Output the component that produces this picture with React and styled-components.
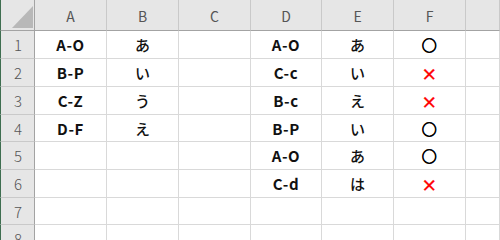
import { Fragment } from "react";
import styled, { createGlobalStyle } from "styled-components";

const Global = createGlobalStyle`
  html, body { margin: 0; padding: 0; background: #fff; }
  body { font-family: "Noto Sans CJK JP", "Noto Sans", sans-serif; }
`;

const Sheet = styled.div`
  display: grid;
  grid-template-columns: 35px 72px 72px 72px 71px 72px 72px 1fr;
  grid-template-rows: 31px 28px 28px 28px 27px 28px 28px 27px 20px;
  width: 500px;
  height: 240px;
  overflow: hidden;
`;

const Corner = styled.div`
  background: #e6e6e6;
  border-left: 1px solid #3f6e50;
  border-right: 1px solid #a3a3a3;
  border-bottom: 1px solid #a3a3a3;
  display: flex;
  align-items: flex-end;
  justify-content: flex-end;
  padding: 0 1px 2px 0;
  svg { display: block; }
`;

const ColHead = styled.div`
  background: #e6e6e6;
  border-right: 1px solid #c9c9c9;
  border-bottom: 1px solid #a3a3a3;
  display: flex;
  align-items: center;
  justify-content: center;
  color: #555;
  font-size: 14px;
  padding-top: 1px;
`;

const RowHead = styled.div`
  background: #e6e6e6;
  border-left: 1px solid #3f6e50;
  border-right: 1px solid #a3a3a3;
  border-bottom: 1px solid #c9c9c9;
  display: flex;
  align-items: flex-start;
  justify-content: center;
  color: #555;
  font-size: 15px;
  font-weight: 300;
  line-height: 27px;
  padding-left: 1px;
`;

const Cell = styled.div`
  border-right: 1px solid #d9d9d9;
  border-bottom: 1px solid #d9d9d9;
  display: flex;
  align-items: center;
  justify-content: center;
  font-size: 15px;
  letter-spacing: ${(p) => (p.$kana ? "0" : "0.6px")};
  font-weight: ${(p) => (p.$kana ? 500 : 700)};
  color: #111;
`;

const Mark = styled.span`
  font-size: ${(p) => (p.$cross ? "16px" : "15px")};
  font-weight: 700;
  line-height: 1;
  color: ${(p) => (p.$cross ? "#ff0000" : "#000")};
  -webkit-text-stroke: ${(p) => (p.$cross ? "0.3px #ff0000" : "0.7px #000")};
`;

const cols = ["A", "B", "C", "D", "E", "F", ""];

const rows = [
  ["A-O", "あ", "", "A-O", "あ", "○"],
  ["B-P", "い", "", "C-c", "い", "×"],
  ["C-Z", "う", "", "B-c", "え", "×"],
  ["D-F", "え", "", "B-P", "い", "○"],
  ["", "", "", "A-O", "あ", "○"],
  ["", "", "", "C-d", "は", "×"],
  ["", "", "", "", "", ""],
  ["", "", "", "", "", ""],
];

const isKana = (s) => /[\u3040-\u30ff]/.test(s);

export default function App() {
  return (
    <>
      <Global />
      <Sheet>
        <Corner>
          <svg width="21" height="22" viewBox="0 0 21 22">
            <polygon points="0,22 21,22 21,0" fill="#b8b8b8" />
          </svg>
        </Corner>
        {cols.map((c, i) => (
          <ColHead key={i}>{c}</ColHead>
        ))}
        {rows.map((r, ri) => (
          <Fragment key={ri}>
            <RowHead>{ri + 1}</RowHead>
            {r.map((v, ci) =>
              ci === 5 && v ? (
                <Cell key={ci}>
                  <Mark $cross={v === "×"}>{v}</Mark>
                </Cell>
              ) : (
                <Cell key={ci} $kana={isKana(v)}>
                  {v}
                </Cell>
              )
            )}
            <Cell />
          </Fragment>
        ))}
      </Sheet>
    </>
  );
}
